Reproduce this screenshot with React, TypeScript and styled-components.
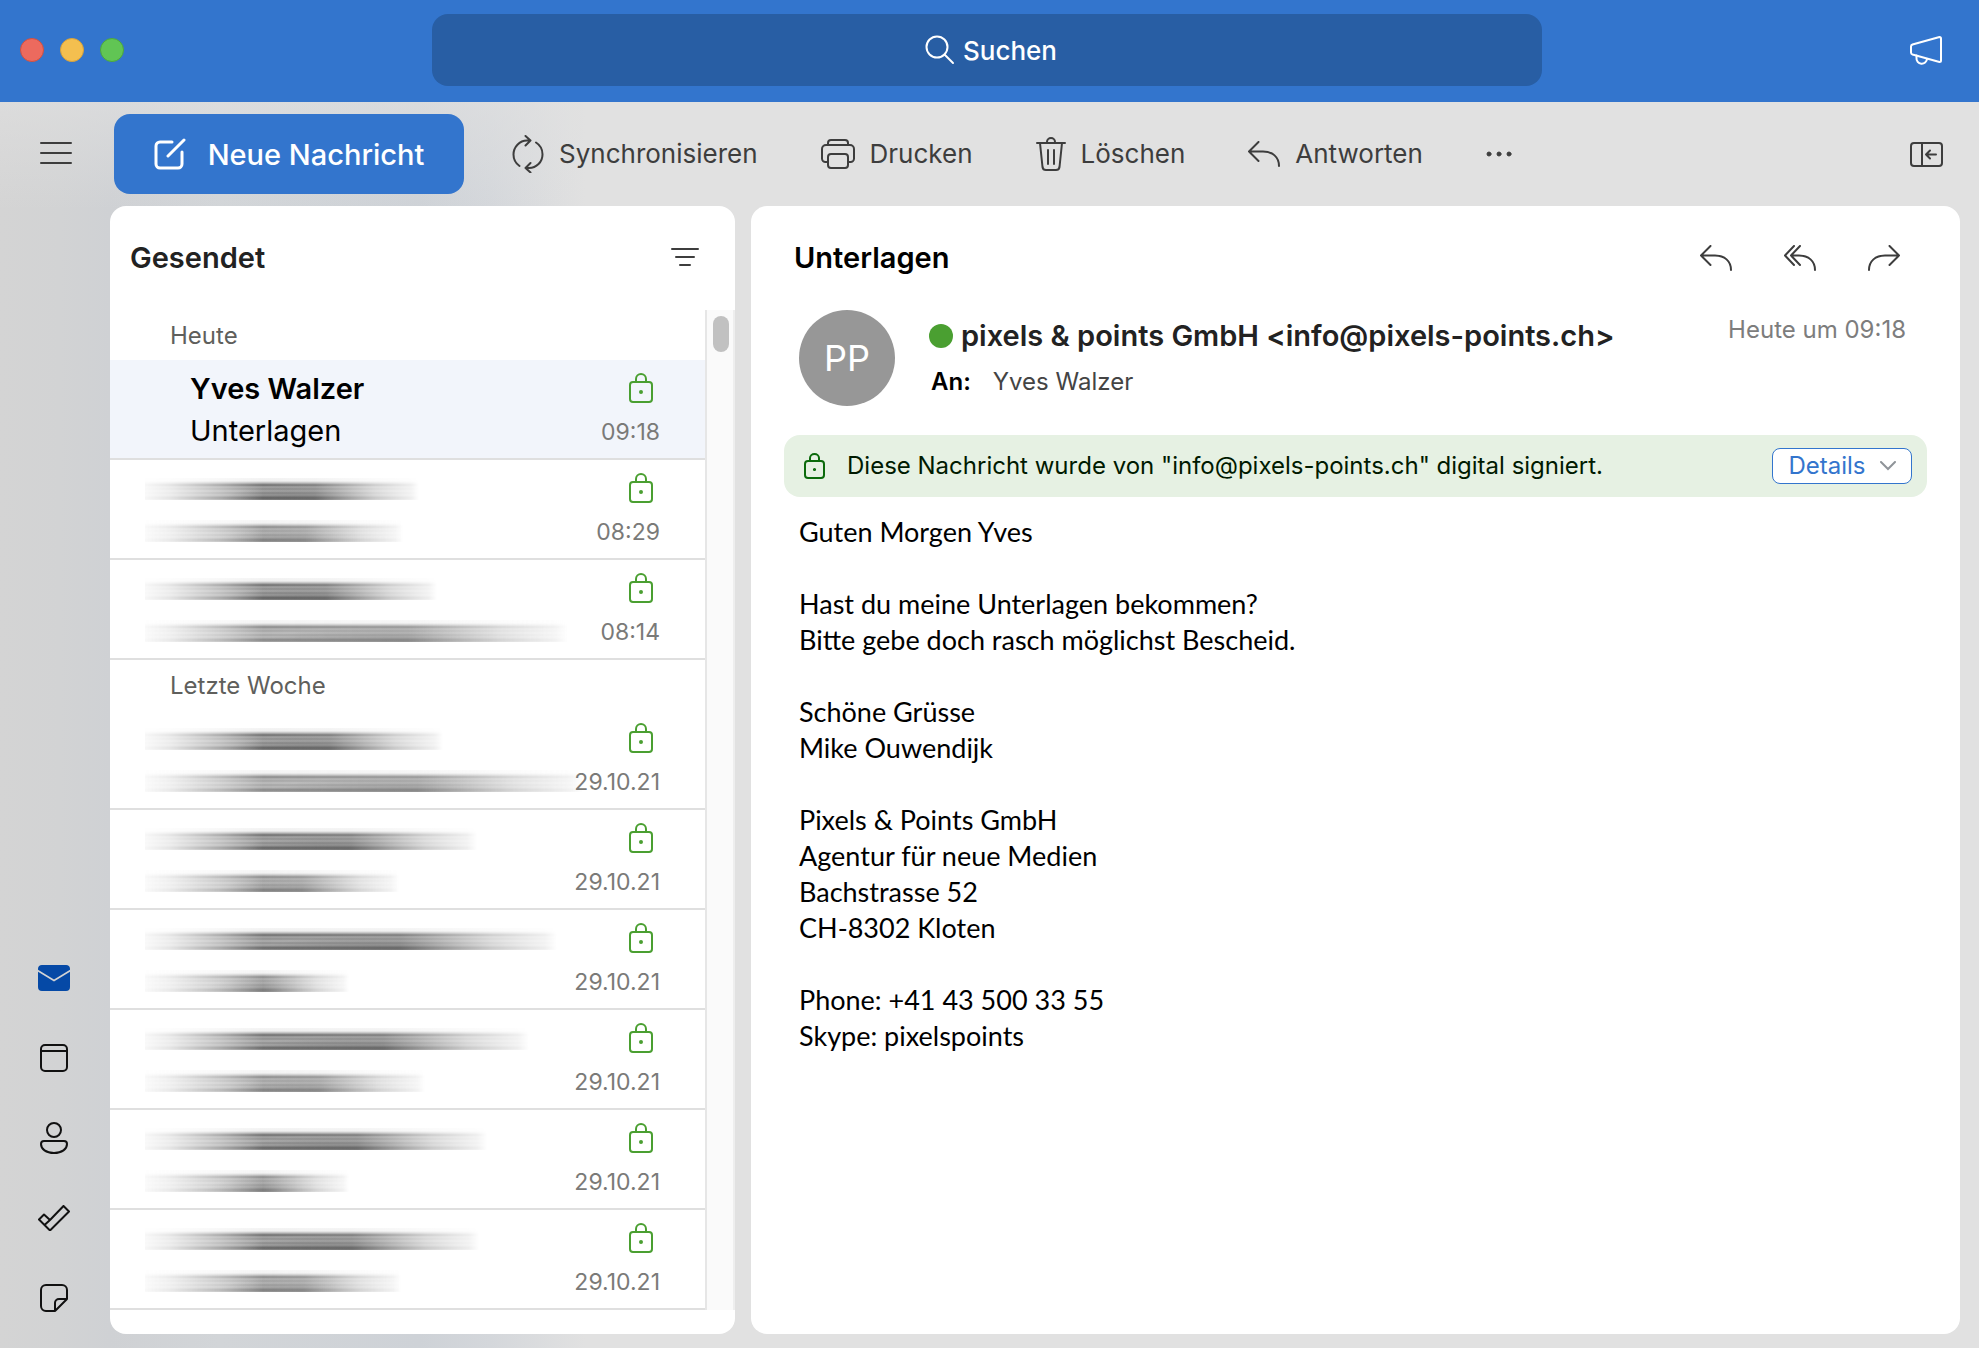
import React from "react";
import styled, { createGlobalStyle, css } from "styled-components";

const blue = "#3375cd";
const green = "#4a9f31";
const ink = "#3d3d3d";

const GlobalStyle = createGlobalStyle`
  *, *::before, *::after { box-sizing: border-box; }
  body { margin: 0; font-family: Inter, "Liberation Sans", sans-serif; color: #222; }
  button, input { font: inherit; color: inherit; }
  button { border: 0; padding: 0; background: none; cursor: pointer; }
  ul, h1, h2, h3, p { margin: 0; padding: 0; }
  ul { list-style: none; }
  svg { display: block; flex: none; }
`;

const Window = styled.div`
  min-height: 100vh;
  display: flex;
  flex-direction: column;
  background:
    linear-gradient(180deg, rgba(225, 225, 225, 0.6) 102px, rgba(225, 225, 225, 0) 210px),
    linear-gradient(90deg, #d4d4d4 0, #d2d3d4 60px, #cfd1d4 110px, #d2d5d8 220px, #ced2d7 420px, #d4d7db 490px, #e1e1e1 585px);
`;

const TitleBar = styled.header`
  display: grid;
  grid-template-columns: 432px minmax(0, 1fr) 437px;
  align-items: center;
  height: 102px;
  padding-bottom: 2px;
  background: ${blue};
  color: #fff;
`;

const Lights = styled.div`
  display: flex;
  gap: 16px;
  padding-left: 20px;
`;

const Light = styled.button<{ $fill: string; $edge: string }>`
  width: 24px;
  height: 24px;
  border-radius: 50%;
  background: ${(p) => p.$fill};
  border: 1px solid ${(p) => p.$edge};
`;

const Search = styled.label`
  display: flex;
  align-items: center;
  justify-content: center;
  gap: 8px;
  height: 72px;
  padding-left: 10px;
  border-radius: 16px;
  background: #285ea4;
`;

const SearchInput = styled.input`
  width: 96px;
  height: 40px;
  padding: 0;
  border: 0;
  outline: 0;
  background: none;
  font-size: 26px;
  font-weight: 500;
  &::placeholder { color: #fff; opacity: 1; }
`;

const TitleEnd = styled.div`
  display: flex;
  justify-content: flex-end;
  padding-right: 36px;
`;

const IconButton = styled.button<{ $light?: boolean }>`
  display: flex;
  color: ${(p) => (p.$light ? "#fff" : ink)};
`;

const Toolbar = styled.div`
  display: flex;
  align-items: center;
  height: 104px;
  padding: 0 36px 0 39px;
`;

const Compose = styled.button`
  display: flex;
  align-items: center;
  justify-content: center;
  gap: 22px;
  width: 350px;
  height: 80px;
  margin: 0 48px 0 41px;
  border-radius: 16px;
  background: ${blue};
  color: #fff;
  font-size: 29px;
  font-weight: 500;
`;

const Actions = styled.div`
  display: flex;
  align-items: center;
  gap: 63px;
  flex: 1;
`;

const Action = styled.button`
  display: flex;
  align-items: center;
  gap: 15px;
  color: ${ink};
  font-size: 26px;
  line-height: 36px;
`;

const Main = styled.div`
  display: flex;
  flex: 1;
  padding: 0 19px 14px 0;
`;

const Rail = styled.nav`
  display: flex;
  flex-direction: column;
  justify-content: flex-end;
  align-items: center;
  width: 110px;
  padding-right: 2px;
  margin-bottom: -4px;
  flex: none;
`;

const RailButton = styled.button<{ $active?: boolean }>`
  display: flex;
  align-items: center;
  justify-content: center;
  width: 64px;
  height: 80px;
  color: ${(p) => (p.$active ? "#0549a6" : "#111")};
`;

const Panel = styled.section`
  display: flex;
  flex-direction: column;
  border-radius: 16px;
  background: #fff;
`;

const ListPanel = styled(Panel)`
  flex: none;
  width: 625px;
  margin-right: 16px;
  padding-bottom: 24px;
`;

const ListHead = styled.div`
  display: flex;
  justify-content: space-between;
  align-items: center;
  height: 104px;
  padding: 0 35px 0 20px;
`;

const Heading = styled.h2`
  font-size: 29px;
  line-height: 40px;
  font-weight: 600;
`;

const ListBody = styled.div`
  display: flex;
`;

const Groups = styled.div`
  flex: 1;
  min-width: 0;
`;

const GroupTitle = styled.h3`
  height: 50px;
  padding-left: 60px;
  font-size: 24px;
  line-height: 52px;
  font-weight: 400;
  color: #5f5f5c;
`;

const Mail = styled.button<{ $selected?: boolean }>`
  display: grid;
  grid-template-columns: minmax(0, 1fr) auto;
  grid-template-rows: 42px 42px;
  align-items: center;
  width: 100%;
  height: 100px;
  padding: 8px 45px 6px 35px;
  border-bottom: 2px solid #dfdfdf;
  text-align: left;
  background: ${(p) => (p.$selected ? "#f2f5fb" : "#fff")};
`;

const Sender = styled.span<{ $strong?: boolean }>`
  padding-left: 45px;
  font-size: 29px;
  line-height: 42px;
  color: #000;
  ${(p) => p.$strong && css`font-weight: 600;`}
`;

const LockCell = styled.span`
  justify-self: end;
  padding: 0 7px 2px 0;
  color: ${green};
`;

const Time = styled.time`
  justify-self: end;
  font-size: 23px;
  line-height: 42px;
  padding-top: 2px;
  color: #7a7a78;
`;

/* A sender or subject line smeared out horizontally. */
const Smear = styled.span<{ $w: number; $dark: number }>`
  display: block;
  width: ${(p) => p.$w}px;
  height: 22px;
  margin: 0 -60px 0 0;
  opacity: ${(p) => p.$dark};
  background:
    radial-gradient(ellipse 34% 70% at 62% 100%, rgba(60, 60, 60, 0.45), transparent),
    linear-gradient(
      180deg,
      #f4f4f4 0, #f0f0f0 3px, #b8b8b8 5px, #6b6b6b 7px, #a4a4a4 9px, #8e8e8e 11px,
      #b0b0b0 13px, #8e8e8e 15px, #aaa 17px, #666 20px, #999 22px
    );
  mask-image: linear-gradient(
    90deg,
    rgba(0, 0, 0, 0.06) 0, rgba(0, 0, 0, 0.18) 24px, rgba(0, 0, 0, 0.6) 76px, #000 118px,
    rgba(0, 0, 0, 0.9) 62%, rgba(0, 0, 0, 0.35) 84%, rgba(0, 0, 0, 0.12) 97%, transparent 100%
  );
`;

const Track = styled.div`
  width: 30px;
  padding: 6px 0 0 6px;
  border-left: 2px solid #e6e6e6;
  border-right: 2px solid #eee;
  background: #fafafa;
`;

const Thumb = styled.div`
  width: 16px;
  height: 36px;
  border-radius: 8px;
  background: #c1c1c1;
`;

const Reader = styled(Panel)`
  flex: 1;
  min-width: 0;
  padding: 0 33px 0 33px;
`;

const ReaderHead = styled.div`
  display: flex;
  align-items: center;
  justify-content: space-between;
  height: 104px;
  padding: 0 27px 0 10px;
  color: #000;
`;

const Replies = styled.div`
  display: flex;
  gap: 52px;
`;

const From = styled.div`
  display: flex;
  padding: 0 21px 0 15px;
  height: 125px;
`;

const Avatar = styled.div`
  display: flex;
  align-items: center;
  justify-content: center;
  width: 96px;
  height: 96px;
  margin-right: 34px;
  border-radius: 50%;
  background: #979797;
  color: #fff;
  font-size: 36px;
`;

const Who = styled.div`
  flex: 1;
  padding-top: 6px;
`;

const Address = styled.div`
  display: flex;
  align-items: center;
  gap: 8px;
  font-size: 29px;
  line-height: 40px;
  font-weight: 600;
`;

const Dot = styled.span`
  width: 24px;
  height: 24px;
  border-radius: 50%;
  background: ${green};
`;

const To = styled.div`
  display: flex;
  gap: 22px;
  padding: 8px 0 0 2px;
  font-size: 24px;
  line-height: 36px;
  color: #444;
`;

const ToLabel = styled.span`
  color: #000;
  font-weight: 600;
`;

const Sent = styled.time`
  font-size: 24px;
  line-height: 40px;
  color: #7d7d7d;
`;

const Banner = styled.div`
  display: flex;
  align-items: center;
  gap: 22px;
  height: 62px;
  padding: 0 15px 0 20px;
  border-radius: 16px;
  background: #e6f1e3;
  color: #0b6a0b;
`;

const BannerText = styled.p`
  flex: 1;
  font-size: 24px;
  line-height: 36px;
  color: #001a00;
`;

const Details = styled.button`
  display: flex;
  align-items: center;
  justify-content: center;
  gap: 14px;
  width: 140px;
  height: 36px;
  border: 1px solid ${blue};
  border-radius: 8px;
  background: #fff;
  color: ${blue};
  font-size: 24px;
  line-height: 34px;
`;

const Body = styled.div`
  display: flex;
  flex-direction: column;
  gap: 36px;
  padding: 17px 15px;
  font-family: Lato, "Open Sans", sans-serif;
  font-size: 27px;
  line-height: 36px;
  color: #000;
`;

type IconProps = { w: number; h: number; sw?: number; children: React.ReactNode };
const Icon = ({ w, h, sw = 2, children }: IconProps) => (
  <svg width={w} height={h} viewBox={`0 0 ${w} ${h}`} fill="none" stroke="currentColor"
    strokeWidth={sw} strokeLinecap="round" strokeLinejoin="round" aria-hidden="true">
    {children}
  </svg>
);

const ReplyIcon = () => (
  <Icon w={32} h={26}><path d="M10.500 1 1 10.500l9.500 9.500M1 10.500h14c9.500 0 16 5.500 16 14.500" /></Icon>
);
const ReplyAllIcon = () => (
  <Icon w={32} h={26}><path d="M10 1 1 10.500 10 20M16 1 7 10.500 16 20M7 10.500h8c9.500 0 16 5.500 16 14.500" /></Icon>
);
const ForwardIcon = () => (
  <Icon w={32} h={26}><path d="M21.500 1 31 10.500 21.500 20M31 10.500H17C7.500 10.500 1 16 1 25" /></Icon>
);
const LockIcon = () => (
  <Icon w={24} h={30}>
    <rect x="1" y="9" width="22" height="20" rx="3" />
    <path d="M7 9V6a5 5 0 0 1 10 0v3" />
    <circle cx="12" cy="19" r="1" fill="currentColor" />
  </Icon>
);
const SmallLockIcon = () => (
  <Icon w={21} h={26}>
    <rect x="1" y="8" width="19" height="17" rx="3" />
    <path d="M6 8V5a4.500 4 0 0 1 9 0v3" />
    <circle cx="10.500" cy="16.500" r="0.600" fill="currentColor" />
  </Icon>
);

type MailItem = { time: string; sender?: string; subject?: string; smear?: [number, number] };
const groups: { title: string; mails: MailItem[] }[] = [
  {
    title: "Heute",
    mails: [
      { time: "09:18", sender: "Yves Walzer", subject: "Unterlagen" },
      { time: "08:29", smear: [274, 258] },
      { time: "08:14", smear: [292, 423] },
    ],
  },
  {
    title: "Letzte Woche",
    mails: [
      { time: "29.10.21", smear: [298, 438] },
      { time: "29.10.21", smear: [332, 254] },
      { time: "29.10.21", smear: [412, 204] },
      { time: "29.10.21", smear: [384, 280] },
      { time: "29.10.21", smear: [342, 204] },
      { time: "29.10.21", smear: [334, 256] },
    ],
  },
];

const letter = [
  ["Guten Morgen Yves"],
  ["Hast du meine Unterlagen bekommen?", "Bitte gebe doch rasch möglichst Bescheid."],
  ["Schöne Grüsse", "Mike Ouwendijk"],
  ["Pixels & Points GmbH", "Agentur für neue Medien", "Bachstrasse 52", "CH-8302 Kloten"],
  ["Phone: +41 43 500 33 55", "Skype: pixelspoints"],
];

export default function App() {
  return (
    <Window>
      <GlobalStyle />
      <TitleBar>
        <Lights>
          <Light $fill="#ec6a5e" $edge="#d1503f" aria-label="Schliessen" />
          <Light $fill="#f4bf4f" $edge="#d8a13a" aria-label="Minimieren" />
          <Light $fill="#61c554" $edge="#4ca73c" aria-label="Maximieren" />
        </Lights>
        <Search>
          <Icon w={30} h={30}><circle cx="12" cy="12" r="10.500" /><path d="M19.500 19.500 28 28" /></Icon>
          <SearchInput type="text" placeholder="Suchen" aria-label="Suchen" />
        </Search>
        <TitleEnd>
          <IconButton $light aria-label="Neuigkeiten">
            <Icon w={34} h={30}>
              <path d="M30.500 2 3.500 9.500Q2 10 2 11.500v6Q2 19 3.500 19.500l27 7.500q1.500 0 1.500-1.500v-22Q32 2 30.500 2Z" />
              <path d="M7.500 20.500v2.500a5 5 0 0 0 10.500 1" />
            </Icon>
          </IconButton>
        </TitleEnd>
      </TitleBar>

      <Toolbar>
        <IconButton aria-label="Menü">
          <Icon w={34} h={24}><path d="M2 1h30M2 11h30M2 21h30" /></Icon>
        </IconButton>
        <Compose>
          <Icon w={32} h={32} sw={3}>
            <path d="M18 4H6a4 4 0 0 0-4 4v18a4 4 0 0 0 4 4h18a4 4 0 0 0 4-4V14" />
            <path d="M14 18 30 2" />
          </Icon>
          Neue Nachricht
        </Compose>
        <Actions>
          <Action>
            <Icon w={32} h={38}>
              <path d="M7.500 31A14 14 0 0 1 1.500 19.500C1.500 12 7.500 5.500 15 5.500h3.500M13.500 1l5 4.500-5 5" />
              <path d="M24 7.500a14 14 0 0 1 6.500 12C30.500 27 24.500 33 17 33h-3.500M18.500 28l-5 5 5 4.500" />
            </Icon>
            Synchronisieren
          </Action>
          <Action>
            <Icon w={34} h={30}>
              <path d="M7 23H4.500A3.500 3.500 0 0 1 1 19.500V10a4 4 0 0 1 4-4h24a4 4 0 0 1 4 4v9.500a3.500 3.500 0 0 1-3.500 3.500H27" />
              <path d="M7 6V4a3 3 0 0 1 3-3h14a3 3 0 0 1 3 3v2" />
              <rect x="7" y="15" width="20" height="14" rx="3" />
            </Icon>
            Drucken
          </Action>
          <Action>
            <Icon w={30} h={34}>
              <path d="M1 6h28M4 6l2.500 24q.500 3 3.500 3h10q3 0 3.500-3L26 6M11 6V5a4 4 0 0 1 8 0v1M12 13v14M18 13v14" />
            </Icon>
            Löschen
          </Action>
          <Action><ReplyIcon />Antworten</Action>
          <IconButton aria-label="Weitere Aktionen">
            <Icon w={26} h={6} sw={1}>
              <g fill="currentColor"><circle cx="3" cy="3" r="2" /><circle cx="13" cy="3" r="2" /><circle cx="23" cy="3" r="2" /></g>
            </Icon>
          </IconButton>
        </Actions>
        <IconButton aria-label="Seitenleiste">
          <Icon w={33} h={25}>
            <rect x="1" y="1" width="31" height="23" rx="3" />
            <path d="M12 1v23M26 12.500H16M20 8.500l-4 4 4 4" />
          </Icon>
        </IconButton>
      </Toolbar>

      <Main>
        <Rail aria-label="Bereiche">
          <RailButton $active aria-label="E-Mail">
            <Icon w={32} h={26}>
              <path stroke="none" fill="currentColor" d="M4 0h24a4 4 0 0 1 4 3.700v1L16 14.500 0 4.700v-1A4 4 0 0 1 4 0Z" />
              <path stroke="none" fill="currentColor" d="M0 6.700 16 16.500 32 6.700V22a4 4 0 0 1-4 4H4a4 4 0 0 1-4-4Z" />
            </Icon>
          </RailButton>
          <RailButton aria-label="Kalender">
            <Icon w={28} h={28}><rect x="1" y="1" width="26" height="26" rx="4" /><path d="M1 7h26" /></Icon>
          </RailButton>
          <RailButton aria-label="Personen">
            <Icon w={28} h={32}>
              <circle cx="14" cy="8" r="7" />
              <path d="M4 19h20a3 3 0 0 1 3 3c0 5-5 9-13 9S1 27 1 22a3 3 0 0 1 3-3Z" />
            </Icon>
          </RailButton>
          <RailButton aria-label="Aufgaben">
            <Icon w={32} h={26}>
              <path d="M25.500 1 31 6.500 12 25.500 1 14.500 6 9.500l6 5.500ZM6.500 20l5.500-5" />
            </Icon>
          </RailButton>
          <RailButton aria-label="Notizen">
            <Icon w={28} h={28}>
              <path d="M15 27H6a5 5 0 0 1-5-5V6a5 5 0 0 1 5-5h16a5 5 0 0 1 5 5v9L15 27V19a4 4 0 0 1 4-4h8" />
            </Icon>
          </RailButton>
        </Rail>

        <ListPanel>
          <ListHead>
            <Heading>Gesendet</Heading>
            <IconButton aria-label="Filtern">
              <Icon w={30} h={20}><path d="M2 1h26M6 9h18M10 17h10" /></Icon>
            </IconButton>
          </ListHead>
          <ListBody>
            <Groups>
              {groups.map((group) => (
                <div key={group.title}>
                  <GroupTitle>{group.title}</GroupTitle>
                  <ul>
                    {group.mails.map((mail, i) => (
                      <li key={i}>
                        <Mail $selected={!!mail.sender}>
                          {mail.smear ? <Smear $w={mail.smear[0]} $dark={1} /> : <Sender $strong>{mail.sender}</Sender>}
                          <LockCell><LockIcon /></LockCell>
                          {mail.smear ? <Smear $w={mail.smear[1]} $dark={0.8} /> : <Sender>{mail.subject}</Sender>}
                          <Time>{mail.time}</Time>
                        </Mail>
                      </li>
                    ))}
                  </ul>
                </div>
              ))}
            </Groups>
            <Track><Thumb /></Track>
          </ListBody>
        </ListPanel>

        <Reader>
          <ReaderHead>
            <Heading>Unterlagen</Heading>
            <Replies>
              <IconButton aria-label="Antworten"><ReplyIcon /></IconButton>
              <IconButton aria-label="Allen antworten"><ReplyAllIcon /></IconButton>
              <IconButton aria-label="Weiterleiten"><ForwardIcon /></IconButton>
            </Replies>
          </ReaderHead>
          <From>
            <Avatar>PP</Avatar>
            <Who>
              <Address><Dot />pixels &amp; points GmbH &lt;info@pixels-points.ch&gt;</Address>
              <To><ToLabel>An:</ToLabel>Yves Walzer</To>
            </Who>
            <Sent>Heute um 09:18</Sent>
          </From>
          <Banner>
            <SmallLockIcon />
            <BannerText>Diese Nachricht wurde von "info@pixels-points.ch" digital signiert.</BannerText>
            <Details aria-haspopup="true">
              Details
              <svg width="16" height="10" viewBox="0 0 16 10" fill="none" stroke="#8f9499" strokeWidth="2" strokeLinecap="round" aria-hidden="true"><path d="M1 1l7 7 7-7" /></svg>
            </Details>
          </Banner>
          <Body>
            {letter.map((lines) => (
              <p key={lines[0]}>
                {lines.map((line, i) => (
                  <React.Fragment key={line}>{i > 0 && <br />}{line}</React.Fragment>
                ))}
              </p>
            ))}
          </Body>
        </Reader>
      </Main>
    </Window>
  );
}
